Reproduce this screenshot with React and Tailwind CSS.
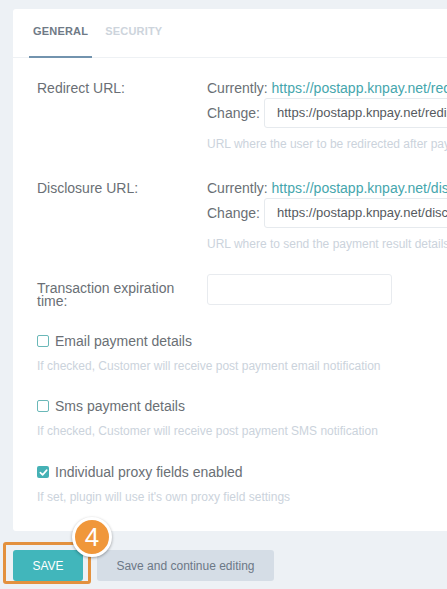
import React from 'react';

const font = { fontFamily: '"Liberation Sans", Arial, sans-serif' };

const Checkbox = ({ checked }) =>
  checked ? (
    <span className="flex items-center justify-center w-[12px] h-[12px] rounded-[2px] bg-[#45b1b5] shrink-0">
      <svg width="9" height="9" viewBox="0 0 10 10" fill="none">
        <path d="M1.5 5.2 L4 7.6 L8.6 2.4" stroke="white" strokeWidth="1.8" strokeLinecap="round" strokeLinejoin="round" />
      </svg>
    </span>
  ) : (
    <span className="w-[12px] h-[12px] rounded-[2px] border-[1.5px] border-[#6ab8b8] bg-white shrink-0" />
  );

const UrlRow = ({ label, current, value, help }) => (
  <div className="flex">
    <div className="w-[170px] shrink-0 h-[20px] leading-[20px] text-[14px] text-[#6a6f75]">{label}</div>
    <div className="flex flex-col">
      <div className="h-[20px] leading-[20px] text-[14px] text-[#6a6f75] whitespace-nowrap">
        Currently: <span className="text-[#45a6ad]">{current}</span>
      </div>
      <div className="flex items-center">
        <span className="w-[57px] text-[14px] text-[#6a6f75]">Change:</span>
        <div className="h-[30px] w-[400px] border border-[#e6eaee] rounded-[3px] bg-white flex items-center pl-[12px] text-[13px] text-[#555a60] whitespace-nowrap">
          {value}
        </div>
      </div>
      <div className="mt-[8px] h-[16px] leading-[16px] text-[12px] text-[#cbd3dc] whitespace-nowrap">{help}</div>
    </div>
  </div>
);

const CheckRow = ({ checked, label, help, top }) => (
  <div className={top}>
    <div className="flex items-center gap-[6px] h-[20px]">
      <Checkbox checked={checked} />
      <span className="text-[14px] text-[#6a6f75] leading-[20px]">{label}</span>
    </div>
    <div className="mt-[7px] h-[16px] leading-[16px] text-[12px] text-[#cbd3dc] whitespace-nowrap">{help}</div>
  </div>
);

export default function App() {
  return (
    <div className="w-[447px] h-[589px] overflow-hidden bg-[#edf1f5] pt-[9px] relative" style={font}>
      <div className="ml-[13px] w-[700px] bg-white rounded-[3px]">
        {/* Tabs */}
        <div className="flex pl-[16px] gap-[9px] border-b border-[#eef1f4] h-[49px]">
          <div className="px-[4px] pt-[14px] border-b-2 border-[#7293ae] -mb-px text-[11px] font-bold text-[#6f7a86] tracking-[0.2px]">
            GENERAL
          </div>
          <div className="px-[4px] pt-[14px] text-[11px] font-bold text-[#cdd4dc] tracking-[0.2px]">SECURITY</div>
        </div>

        <div className="pl-[24px] pt-[20px] pb-[26px]">
          <UrlRow
            label="Redirect URL:"
            current="https://postapp.knpay.net/redirect/"
            value="https://postapp.knpay.net/redirect/"
            help="URL where the user to be redirected after payment"
          />
          <div className="mt-[26px]">
            <UrlRow
              label="Disclosure URL:"
              current="https://postapp.knpay.net/disclosure/"
              value="https://postapp.knpay.net/disclosure/"
              help="URL where to send the payment result details"
            />
          </div>

          <div className="flex mt-[22px]">
            <div className="w-[170px] shrink-0 pt-[8px]">
              <div className="w-[150px] text-[14px] leading-[13px] text-[#6a6f75]">Transaction expiration time:</div>
            </div>
            <div className="h-[31px] w-[185px] border border-[#e8ebef] rounded-[3px] bg-white" />
          </div>

          <CheckRow
            top="mt-[23px]"
            label="Email payment details"
            help="If checked, Customer will receive post payment email notification"
          />
          <CheckRow
            top="mt-[22px]"
            label="Sms payment details"
            help="If checked, Customer will receive post payment SMS notification"
          />
          <CheckRow
            top="mt-[23px]"
            checked
            label="Individual proxy fields enabled"
            help="If set, plugin will use it's own proxy field settings"
          />
        </div>
      </div>

      {/* Actions */}
      <div className="flex gap-[14px] ml-[13px] mt-[19px]">
        <button className="h-[31px] w-[70px] rounded-[3px] bg-[#41b6bb] text-white text-[12px]">SAVE</button>
        <button className="h-[31px] w-[177px] rounded-[3px] bg-[#d5dde6] text-[#6c7886] text-[12px]">
          Save and continue editing
        </button>
      </div>

      {/* Tutorial highlight */}
      <div className="absolute left-[3px] top-[542px] w-[88px] h-[42px] border-[3px] border-[#e3913e] rounded-[3px] pointer-events-none" />
      <div className="absolute left-[72px] top-[517px] w-[40px] h-[40px] rounded-full bg-[#f0973a] border-[3px] border-white shadow-[0_1px_3px_rgba(0,0,0,0.35)] flex items-center justify-center text-white text-[26px] leading-none">
        4
      </div>
    </div>
  );
}
